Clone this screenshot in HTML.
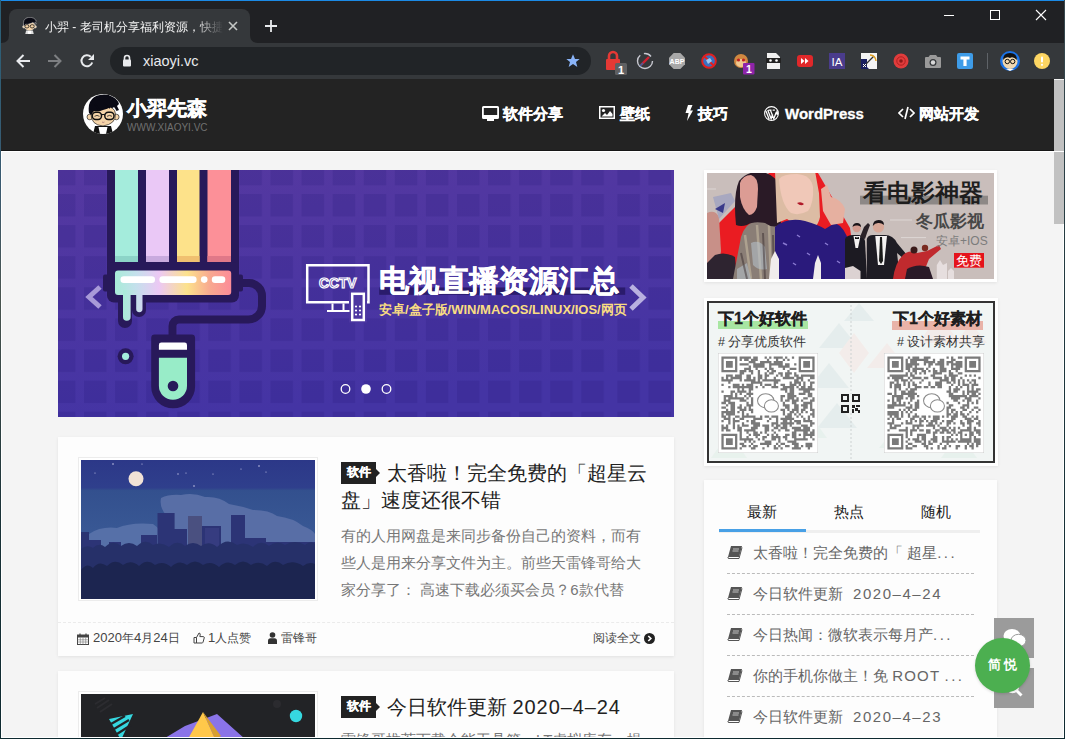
<!DOCTYPE html>
<html><head><meta charset="utf-8">
<style>
*{margin:0;padding:0;box-sizing:border-box}
html,body{width:1065px;height:739px;overflow:hidden;background:#202124;font-family:"Liberation Sans",sans-serif}
.a{position:absolute}
svg{display:block}
.card{background:#fdfdfd;box-shadow:0 1px 3px rgba(0,0,0,.08)}
.tag{width:35px;height:21.5px;background:#222;color:#fff;font-size:12px;font-weight:bold;-webkit-text-stroke:.3px #fff;line-height:21.5px;text-align:center}
.tag:after{content:"";position:absolute;left:35px;top:6.5px;border-left:4px solid #222;border-top:4px solid transparent;border-bottom:4px solid transparent}
.ttl{color:#222;font-size:20px;line-height:27px}
.exc{color:#777;font-size:15px;line-height:27px}
.qrt{top:309px;color:#1e1e1e;font-size:16px;font-weight:bold;-webkit-text-stroke:.3px #1e1e1e;line-height:20px;white-space:nowrap}
.qrs{top:334px;color:#333;font-size:12.5px;line-height:16px;white-space:nowrap}
.tab{top:502px;color:#222;font-size:15px;line-height:20px;white-space:nowrap}
.li{left:753px;color:#666;font-size:15px;line-height:26px;white-space:nowrap}
.ls{letter-spacing:1.55px}
.dl{left:727px;width:247px;height:0;border-top:1px dashed #bbb}
.meta{top:630px;color:#444;font-size:12px;line-height:16px;white-space:nowrap}
.meta b{font-weight:normal;font-size:13px}
.nav{top:104px;color:#fff;font-size:15px;font-weight:bold;-webkit-text-stroke:.3px #fff;line-height:20px;white-space:nowrap}
</style></head>
<body>
<!-- window borders -->
<div class="a" style="left:0;top:0;width:1065px;height:1px;background:#1b8ae6;z-index:50"></div>
<div class="a" style="left:0;top:0;width:1px;height:739px;background:linear-gradient(#2a6078,#3a5a70 25%,#4a5550 40%,#1a3238 70%,#0e2a30);z-index:50"></div>
<div class="a" style="left:1064px;top:0;width:1px;height:739px;background:linear-gradient(#3a4a50,#20383e 40%,#0e2a30);z-index:50"></div>
<div class="a" style="left:0;top:738px;width:1065px;height:1px;background:#0e2a30;z-index:50"></div>
<div class="a" style="left:1px;top:151px;width:1063px;height:1px;background:#fff;z-index:49"></div>
<div class="a" style="left:1px;top:151px;width:1px;height:587px;background:#fff;z-index:49"></div>
<div class="a" style="left:1px;top:737px;width:1063px;height:1px;background:#fff;z-index:49"></div>
<div class="a" style="left:1063px;top:224px;width:1px;height:514px;background:#fff;z-index:49"></div>
<div class="a" style="left:1px;top:150px;width:1053px;height:1px;background:#161616;z-index:49"></div>

<!-- tab strip -->
<div class="a" style="left:0;top:1px;width:1065px;height:42px;background:#202124"></div>
<div class="a" style="left:9px;top:9px;width:241px;height:34px;background:#35383b;border-radius:8px 8px 0 0"></div>
<div id="tabtitle" class="a" style="left:45px;top:18px;width:178px;height:18px;overflow:hidden;color:#f4f4f4;font-size:12px;line-height:18px;white-space:nowrap;-webkit-mask-image:linear-gradient(90deg,#000 150px,transparent 178px)">小羿 - 老司机分享福利资源，快捷</div>
<!-- tab close -->
<svg class="a" style="left:228px;top:21px" width="10" height="10"><path d="M1 1L9 9M9 1L1 9" stroke="#c4c7c5" stroke-width="1.6"/></svg>
<!-- new tab plus -->
<svg class="a" style="left:265px;top:20px" width="12" height="12"><path d="M6 0V12M0 6H12" stroke="#e8eaed" stroke-width="1.8"/></svg>
<!-- window controls -->
<div class="a" style="left:944px;top:15px;width:10px;height:1px;background:#fff"></div>
<div class="a" style="left:990px;top:10px;width:10px;height:10px;border:1px solid #fff"></div>
<svg class="a" style="left:1035px;top:9px" width="12" height="12"><path d="M1 1L11 11M11 1L1 11" stroke="#fff" stroke-width="1.1"/></svg>

<!-- toolbar -->
<div class="a" style="left:1px;top:43px;width:1063px;height:36px;background:#35383b"></div>
<!-- tab flares -->
<svg class="a" style="left:1px;top:35px" width="8" height="8"><path d="M0 8H8V0Q8 8 0 8Z" fill="#35383b"/></svg>
<svg class="a" style="left:250px;top:35px" width="8" height="8"><path d="M0 0V8H8Q0 8 0 0Z" fill="#35383b"/></svg>
<!-- favicon -->
<svg class="a" style="left:21px;top:17px" width="17" height="17" viewBox="0 0 40 40">
<path d="M12 32L10 40H30L28 32Z" fill="#ddd"/><path d="M15.5 33L17 40H23L24.5 33Z" fill="#fff"/>
<circle cx="6.8" cy="23" r="3" fill="#f5d4a8" stroke="#ddd" stroke-width="1.2"/><circle cx="33.3" cy="23" r="3" fill="#f5d4a8" stroke="#ddd" stroke-width="1.2"/>
<path d="M8 20Q8 12 20 12Q32 12 32.5 20Q33 30 20 32Q8 31 8 20Z" fill="#f5d4a8" stroke="#ddd" stroke-width="1"/>
<path d="M6 19Q5 12 7 8Q10 2 17 1Q24 -0.5 30 3Q35 6 36 10L34 12L36 16L33.5 17Q32 14 31 13Q29 15 27 13Q25 15 20 16Q16 18 11 17Q9 19 8.5 21Z" fill="#0a0a14" stroke="#ccc" stroke-width="1.2"/>
<rect x="9.3" y="18.2" width="9.2" height="7.3" rx="3.4" fill="none" stroke="#111" stroke-width="1.8"/><rect x="21.8" y="18.2" width="9.2" height="7.3" rx="3.4" fill="none" stroke="#111" stroke-width="1.8"/>
</svg>
<!-- nav buttons -->
<svg class="a" style="left:15px;top:53px" width="16" height="16" viewBox="0 0 16 16"><path d="M15 8H2.5M8.5 2L2.5 8L8.5 14" fill="none" stroke="#e8eaed" stroke-width="2"/></svg>
<svg class="a" style="left:47px;top:53px" width="16" height="16" viewBox="0 0 16 16"><path d="M1 8H13.5M7.5 2L13.5 8L7.5 14" fill="none" stroke="#7d7f82" stroke-width="2"/></svg>
<svg class="a" style="left:79px;top:53px" width="16" height="16" viewBox="0 0 16 16"><path d="M13.2 9.5A5.5 5.5 0 1 1 11.8 3.8" fill="none" stroke="#e8eaed" stroke-width="2"/><path d="M15 1V7H9Z" fill="#e8eaed"/></svg>
<!-- omnibox -->
<div class="a" style="left:110px;top:47px;width:481px;height:28px;background:#212427;border-radius:14px"></div>
<svg class="a" style="left:122px;top:54px" width="10" height="13" viewBox="0 0 10 13"><path d="M2.5 6V4A2.5 2.5 0 0 1 7.5 4V6" fill="none" stroke="#e8eaed" stroke-width="1.6"/><rect x="1" y="5.5" width="8" height="7" rx="1" fill="#e8eaed"/></svg>
<div class="a" style="left:143px;top:51px;color:#e8eaed;font-size:14.5px;line-height:20px">xiaoyi.vc</div>
<svg class="a" style="left:565px;top:53px" width="16" height="16" viewBox="0 0 24 24"><path d="M12 2L15 9H22L16.5 13.5L18.5 21L12 16.5L5.5 21L7.5 13.5L2 9H9Z" fill="#8ab4f8"/></svg>
<!-- extensions -->
<svg class="a" style="left:600px;top:50px" width="30" height="26" viewBox="0 0 30 26">
<path d="M9 9V6A4 4 0 0 1 17 6V9" fill="none" stroke="#e53935" stroke-width="2.6"/><rect x="6" y="9" width="14" height="11" rx="1" fill="#e53935"/>
<rect x="15" y="13" width="12" height="12" rx="1.5" fill="#5f6062"/><text x="21" y="23.5" fill="#fff" font-size="11" font-weight="bold" text-anchor="middle" font-family="Liberation Sans">1</text></svg>
<svg class="a" style="left:636px;top:52px" width="18" height="18" viewBox="0 0 18 18"><circle cx="9" cy="9" r="7.5" fill="none" stroke="#c8c8d0" stroke-width="1.4" stroke-dasharray="30 4 8 5"/><path d="M5 13L13 5" stroke="#d02030" stroke-width="2.4"/><path d="M4 14L7 11" stroke="#4060a0" stroke-width="1.6"/></svg>
<svg class="a" style="left:669px;top:53px" width="16" height="16" viewBox="0 0 16 16"><path d="M4.7 0H11.3L16 4.7V11.3L11.3 16H4.7L0 11.3V4.7Z" fill="#a8a8a8"/><text x="8" y="11" fill="#fff" font-size="7" font-weight="bold" text-anchor="middle" font-family="Liberation Sans">ABP</text></svg>
<svg class="a" style="left:701px;top:53px" width="16" height="16" viewBox="0 0 16 16"><circle cx="8" cy="8" r="6.8" fill="#3a70c0" stroke="#e02020" stroke-width="2"/><path d="M3.5 3.5L12.5 12.5" stroke="#e02020" stroke-width="2"/><path d="M5 7L9 5L11 8L7 11Z" fill="#9ec8f0"/></svg>
<svg class="a" style="left:732px;top:52px" width="24" height="24" viewBox="0 0 24 24"><circle cx="9" cy="9" r="7" fill="#d08840"/><ellipse cx="9" cy="11" rx="5" ry="4" fill="#f0c890"/><circle cx="6.5" cy="8" r="1.6" fill="#c02020"/><circle cx="11.5" cy="8" r="1.6" fill="#c02020"/><rect x="11" y="11" width="11.5" height="11.5" rx="1" fill="#8e24aa"/><text x="16.8" y="21" fill="#fff" font-size="10.5" font-weight="bold" text-anchor="middle" font-family="Liberation Sans">1</text></svg>
<svg class="a" style="left:766px;top:53px" width="15" height="16" viewBox="0 0 15 16"><path d="M1 0H10L14 4V16H1Z" fill="#f0f0f0"/><rect x="0" y="5" width="15" height="5" fill="#222"/><circle cx="4.5" cy="7.5" r="1.3" fill="#fff"/><circle cx="10.5" cy="7.5" r="1.3" fill="#fff"/></svg>
<svg class="a" style="left:797px;top:54px" width="16" height="14" viewBox="0 0 16 14"><rect x="0" y="1" width="16" height="12" rx="3" fill="#e0282a"/><path d="M4 4L7.5 7L4 10ZM8 4L11.5 7L8 10Z" fill="#fff"/></svg>
<svg class="a" style="left:829px;top:53px" width="16" height="16" viewBox="0 0 16 16"><rect width="16" height="16" fill="#4a3c8c"/><text x="8" y="13" fill="#fff" font-size="11.5" text-anchor="middle" font-family="Liberation Sans">IA</text></svg>
<svg class="a" style="left:861px;top:53px" width="16" height="16" viewBox="0 0 16 16"><rect width="16" height="16" fill="#f4f4f4"/><path d="M0 8L8 16H0Z" fill="#1a2060"/><path d="M0 6H6V16H0Z" fill="#1a2060"/><path d="M2 14L13 3" stroke="#333" stroke-width="1.2"/><path d="M9 2A6 6 0 0 1 15 8" fill="none" stroke="#e0a020" stroke-width="1.5"/><path d="M2 11L5 14M5 11L2 14" stroke="#fff" stroke-width="1"/></svg>
<svg class="a" style="left:893px;top:53px" width="16" height="16" viewBox="0 0 16 16"><circle cx="8" cy="8" r="7.5" fill="#e03c3c"/><circle cx="8" cy="8" r="4.2" fill="none" stroke="#b02020" stroke-width="1"/><circle cx="8" cy="8" r="1.8" fill="#901818"/></svg>
<svg class="a" style="left:925px;top:54px" width="16" height="14" viewBox="0 0 16 14"><path d="M5 1H11L12.5 3H15A1 1 0 0 1 16 4V13A1 1 0 0 1 15 14H1A1 1 0 0 1 0 13V4A1 1 0 0 1 1 3H3.5Z" fill="#9a9a9a"/><circle cx="8" cy="8.5" r="3.5" fill="#35383b"/><circle cx="8" cy="8.5" r="2.2" fill="#d8d8d8"/></svg>
<svg class="a" style="left:957px;top:53px" width="16" height="16" viewBox="0 0 16 16"><rect width="16" height="16" rx="2" fill="#3e9ce8"/><path d="M3.5 3.5H12.5V6.5H9.6V13H6.4V6.5H3.5Z" fill="#fff"/></svg>
<div class="a" style="left:987px;top:53px;width:1px;height:16px;background:#5f6368"></div>
<svg class="a" style="left:1000px;top:51px" width="20" height="20" viewBox="0 0 20 20"><circle cx="10" cy="10" r="10" fill="#1a73e8"/><circle cx="10" cy="10.5" r="7.5" fill="#f0d8b0"/><path d="M3 9Q3 2 10 2Q17 2 17 9Q13 5 10 7Q6 5 3 9Z" fill="#111"/><circle cx="7.3" cy="10.5" r="2.2" fill="none" stroke="#111" stroke-width="1"/><circle cx="12.7" cy="10.5" r="2.2" fill="none" stroke="#111" stroke-width="1"/><path d="M6 18L10 20L14 18Z" fill="#fff"/></svg>
<svg class="a" style="left:1034px;top:53px" width="16" height="16" viewBox="0 0 16 16"><circle cx="8" cy="8" r="8" fill="#fdd663"/><rect x="7" y="3.5" width="2" height="6" rx="1" fill="#fff"/><circle cx="8" cy="11.8" r="1.1" fill="#fff"/></svg>

<!-- page -->
<div class="a" style="left:1px;top:79px;width:1053px;height:659px;background:#f4f4f4"></div>
<!-- site header -->
<div class="a" style="left:1px;top:79px;width:1053px;height:71px;background:#232323"></div>
<svg class="a" style="left:82.7px;top:94.2px" width="40" height="40" viewBox="0 0 40 40">
<defs><clipPath id="avc"><circle cx="20" cy="20" r="20"/></clipPath></defs>
<circle cx="20" cy="20" r="20" fill="#fff"/>
<g clip-path="url(#avc)">
<path d="M12 32L10 40H30L28 32Z" fill="#111"/><path d="M15.5 33L17 40H23L24.5 33Z" fill="#fff"/>
<circle cx="6.8" cy="23" r="2.8" fill="#f5d4a8" stroke="#222" stroke-width=".7"/><circle cx="33.3" cy="23" r="2.8" fill="#f5d4a8" stroke="#222" stroke-width=".7"/>
<path d="M8 20Q8 12 20 12Q32 12 32.5 20Q33 30 20 32Q8 31 8 20Z" fill="#f5d4a8" stroke="#222" stroke-width=".7"/>
<path d="M6 19Q5 12 7 8Q10 2 17 1Q24 -0.5 30 3Q35 6 36 10L34 12L36 16L33.5 17Q32 14 31 13Q29 15 27 13Q25 15 20 16Q16 18 11 17Q9 19 8.5 21Z" fill="#0a0a14"/>
<path d="M21 9Q25 13 27 14M12 10L16 16" stroke="#0a0a14" stroke-width="1.5"/>
<rect x="9.3" y="18.2" width="9.2" height="7.3" rx="3.4" fill="none" stroke="#111" stroke-width="1.5"/><rect x="21.8" y="18.2" width="9.2" height="7.3" rx="3.4" fill="none" stroke="#111" stroke-width="1.5"/><path d="M18.5 20.5H21.8" stroke="#111" stroke-width="1.2"/>
<path d="M11.5 22.3Q14 20.5 16.5 22.3M24 22.3Q26.5 20.5 29 22.3" fill="none" stroke="#222" stroke-width=".8"/>
<path d="M19 28Q20 29 21.5 28" fill="none" stroke="#a77" stroke-width=".8"/>
</g></svg>
<div class="a" style="left:127px;top:96px;color:#fff;font-size:20px;font-weight:bold;-webkit-text-stroke:.5px #fff;line-height:24px;white-space:nowrap">小羿先森</div>
<div class="a" style="left:127px;top:122px;color:#707070;font-size:10px;line-height:12px;white-space:nowrap">WWW.XIAOYI.VC</div>
<!-- nav -->
<svg class="a" style="left:482px;top:105.5px" width="17" height="15" viewBox="0 0 17 15"><path d="M0 1.5A1.5 1.5 0 0 1 1.5 0H15.5A1.5 1.5 0 0 1 17 1.5V11.5A1.5 1.5 0 0 1 15.5 13H1.5A1.5 1.5 0 0 1 0 11.5Z M1.8 2V9H15.2V2Z" fill="#fff" fill-rule="evenodd"/><rect x="5" y="13" width="7" height="2" fill="#fff"/></svg>
<div class="a nav" style="left:503px">软件分享</div>
<svg class="a" style="left:599px;top:106px" width="16" height="13" viewBox="0 0 16 13"><path d="M0 0H16V13H0Z M1.5 1.5V11.5H14.5V1.5Z" fill="#fff" fill-rule="evenodd"/><circle cx="4.5" cy="4.5" r="1.6" fill="#fff"/><path d="M2.5 10.5L6 7L8 9L11 5L13.5 8V10.5Z" fill="#fff"/></svg>
<div class="a nav" style="left:620px">壁纸</div>
<svg class="a" style="left:685px;top:105px" width="8" height="16" viewBox="0 0 8 16"><path d="M3 0H7.5L5.2 5.5H8L2 16L3.6 8H0.5Z" fill="#fff"/></svg>
<div class="a nav" style="left:698px">技巧</div>
<svg class="a" style="left:764px;top:105.5px" width="15" height="15" viewBox="0 0 20 20"><circle cx="10" cy="10" r="9.2" fill="none" stroke="#fff" stroke-width="1.4"/><path d="M2.5 6.5L7 18M6 5.5H10M5 5.5L9.5 17L11.5 11M8.5 5.5L13 17L16.5 8M11.5 5.5H14.5M17 6Q18.5 9 17.5 12" fill="none" stroke="#fff" stroke-width="1.8"/></svg>
<div class="a nav" style="left:785px">WordPress</div>
<svg class="a" style="left:898px;top:106px" width="17" height="14" viewBox="0 0 17 14"><path d="M5 3L1 7L5 11M12 3L16 7L12 11M10 1L7 13" fill="none" stroke="#fff" stroke-width="1.7"/></svg>
<div class="a nav" style="left:919px">网站开发</div>
<!-- slider -->
<svg class="a" style="left:58px;top:170px" width="616" height="247" viewBox="0 0 616 247">
<defs>
<linearGradient id="sbg" x1="0" y1="0" x2="0.25" y2="1"><stop offset="0" stop-color="#5538a0"/><stop offset="1" stop-color="#4434a4"/></linearGradient>
<pattern id="sq" patternUnits="userSpaceOnUse" x="-5.08" y="-7.1" width="31.08" height="31.1"><rect x="0" y="0" width="22.6" height="22.5" fill="#1e1470" fill-opacity="0.17"/></pattern><pattern id="sq2" patternUnits="userSpaceOnUse" x="-0.08" y="-7.1" width="31.08" height="31.1"><rect x="0" y="0" width="22.6" height="22.5" fill="#1e1470" fill-opacity="0.17"/></pattern>
<linearGradient id="rg" x1="0" y1="0" x2="1" y2="0"><stop offset="0" stop-color="#a8ecd8"/><stop offset="0.18" stop-color="#c4e0ec"/><stop offset="0.38" stop-color="#ecc8f4"/><stop offset="0.62" stop-color="#fce28c"/><stop offset="0.82" stop-color="#f8a890"/><stop offset="1" stop-color="#fc8c98"/></linearGradient>
<linearGradient id="dg" x1="0" y1="0" x2="1" y2="0"><stop offset="0" stop-color="#a8ecd8"/><stop offset="1" stop-color="#d0d8f0"/></linearGradient>
</defs>
<rect width="616" height="247" fill="url(#sbg)"/>
<rect width="553" height="247" fill="url(#sq)"/><rect x="553" width="63" height="247" fill="url(#sq2)"/>
<g transform="translate(-58,-170)">
<!-- stripes frame -->
<rect x="107" y="160" width="132" height="110" fill="#28195a"/>
<rect x="115" y="160" width="23" height="102" fill="#a4ecdc"/><rect x="115" y="256" width="23" height="6" fill="#8cd4c8"/>
<rect x="146" y="160" width="23" height="102" fill="#eac8f6"/><rect x="146" y="256" width="23" height="6" fill="#c8aade"/>
<rect x="177" y="160" width="22.5" height="102" fill="#fde28a"/><rect x="177" y="256" width="22.5" height="6" fill="#f0c070"/>
<rect x="207.5" y="160" width="23.5" height="102" fill="#fc9098"/><rect x="207.5" y="256" width="23.5" height="6" fill="#e07888"/>
<!-- roller -->
<rect x="103" y="274.5" width="6" height="17" rx="2" fill="#28195a"/><rect x="237" y="274.5" width="6" height="17" rx="2" fill="#28195a"/>
<rect x="107" y="262" width="132" height="40.5" rx="7" fill="#28195a"/>
<path d="M118 298V321A7 7 0 0 0 132 321V310A7 7 0 0 0 146 310V298Z" fill="#28195a"/>
<rect x="115" y="270.4" width="116.2" height="24.6" rx="3" fill="url(#rg)"/>
<path d="M123 290V317A3.8 3.8 0 0 0 130.6 317V295H136.2V309A3.15 3.15 0 0 0 142.5 309V290Z" fill="url(#dg)"/>
<rect x="120.5" y="276.3" width="34.5" height="6.7" rx="3.3" fill="#fff"/><rect x="159.4" y="276.3" width="37.2" height="6.7" rx="3.3" fill="#fff"/><circle cx="204.2" cy="279.6" r="3.3" fill="#fff"/><rect x="211.8" y="276.3" width="13.5" height="6.7" rx="3.3" fill="#fff"/>
<!-- wire -->
<path d="M240 283H249A13 13 0 0 1 262 296V306A13.5 13.5 0 0 1 248.5 319.5H179A6.5 6.5 0 0 0 172.5 326V340" fill="none" stroke="#28195a" stroke-width="8"/>
<!-- handle -->
<path d="M151.2 338A3.5 3.5 0 0 1 154.7 334.6H191.6A3.5 3.5 0 0 1 195.1 338V386.4A21.95 21.95 0 0 1 151.2 386.4Z" fill="#28195a"/>
<path d="M158.9 345A2.4 2.4 0 0 1 161.3 342.6H184.6A2.4 2.4 0 0 1 187 345V349.8H158.9Z" fill="#fff"/>
<path d="M158.9 357.8H187V385.7A14.05 14.05 0 0 1 158.9 385.7Z" fill="#98ecc8"/>
<circle cx="173" cy="386" r="5.3" fill="#28195a"/>
<circle cx="125.6" cy="356.3" r="8" fill="#28195a"/><circle cx="125.6" cy="356.3" r="3.6" fill="#a4ecdc"/>
<!-- arrows -->
<path d="M100 287L89 297L100 307" fill="none" stroke="#a89ad8" stroke-width="5" stroke-linejoin="miter"/>
<path d="M631 286L643 297.5L631 309" fill="none" stroke="#b8b0e0" stroke-width="5"/>
<!-- tv -->
<path d="M307.2 265.2H368.5V302.3H307.2Z" fill="none" stroke="#fff" stroke-width="2.5"/>
<rect x="349" y="290.5" width="18" height="32" fill="#4d37a1"/>
<rect x="352.2" y="293.8" width="11.6" height="26.2" fill="none" stroke="#fff" stroke-width="2.5"/>
<circle cx="356" cy="306.5" r="1.1" fill="#fff"/><circle cx="360" cy="306.5" r="1.1" fill="#fff"/><circle cx="356" cy="310.5" r="1.1" fill="#fff"/><circle cx="360" cy="310.5" r="1.1" fill="#fff"/><circle cx="356" cy="314.5" r="1.1" fill="#fff"/><circle cx="360" cy="314.5" r="1.1" fill="#fff"/>
<path d="M332.5 303.5V310M343.5 303.5V310M327 311H349.5" fill="none" stroke="#fff" stroke-width="2"/>
<text x="319" y="288" font-family="Liberation Sans" font-weight="bold" font-size="14.5" fill="none" stroke="#fff" stroke-width="1.2" textLength="37.5" lengthAdjust="spacingAndGlyphs">CCTV</text>
<!-- title band -->
<rect x="379.2" y="287.5" width="246" height="7.3" fill="#2a1b6c"/>
<!-- dots -->
<circle cx="345.5" cy="389" r="4.3" fill="none" stroke="#fff" stroke-width="1.3"/>
<circle cx="366" cy="389" r="4.8" fill="#fff"/>
<circle cx="386.5" cy="389" r="4.3" fill="none" stroke="#fff" stroke-width="1.3"/>
</g>
</svg>
<div class="a" style="left:379px;top:264px;color:#fff;font-size:29.5px;font-weight:bold;-webkit-text-stroke:.6px #fff;line-height:34px;white-space:nowrap">电视直播资源汇总</div>
<div class="a" style="left:379px;top:302px;color:#f9dd82;font-size:13px;font-weight:bold;line-height:16px;white-space:nowrap">安卓/盒子版/WIN/MACOS/LINUX/IOS/网页</div>
<!-- post card 1 -->
<div class="a card" style="left:58px;top:437px;width:616px;height:219px"></div>
<div class="a" style="left:78px;top:457px;width:240px;height:144px;border:1px solid #ececec;background:#fff"></div>
<svg class="a" style="left:81px;top:460px" width="234" height="139" viewBox="0 0 234 139">
<defs><linearGradient id="sky" x1="0" y1="0" x2="0" y2="1"><stop offset="0" stop-color="#2c3888"/><stop offset="0.2" stop-color="#2f3f8c"/><stop offset="0.22" stop-color="#33508e"/><stop offset="0.6" stop-color="#3a5a96"/></linearGradient></defs>
<rect width="234" height="139" fill="url(#sky)"/>
<g fill="#c8c8e8"><circle cx="32" cy="4" r=".8"/><circle cx="14" cy="13" r=".6"/><circle cx="97" cy="14" r=".7"/><circle cx="105" cy="13" r=".6"/><circle cx="113" cy="26" r=".8"/><circle cx="178" cy="6" r=".8"/><circle cx="185" cy="12" r=".6"/><circle cx="160" cy="9" r=".6"/><circle cx="61" cy="4" r=".6"/><circle cx="132" cy="14" r=".6"/></g>
<circle cx="55" cy="18.7" r="7.5" fill="#f2e2d6"/>
<path d="M80 38Q88 34 100 35Q112 32 124 37Q138 36 148 44Q160 46 172 50Q188 50 196 56Q212 58 222 66Q232 70 234 74V88H60Q70 80 84 72Q76 62 86 56Q78 48 80 38Z" fill="#586ea6"/>
<path d="M8 74Q20 66 36 68Q50 62 72 64Q82 70 80 80Q76 86 60 88H10Q2 82 8 74Z" fill="#5670a8"/>
<path d="M0 72H8V96H0Z" fill="#2a3472"/>
<path d="M2 80H20V100H2Z M28 82H40V100H28Z M60 75H76V100H60Z M76.5 53H93.6V100H76.5Z M93 69H106V100H93Z M107 56H121V100H107Z M121 66H140V100H121Z M150 55H164V100H150Z M164 78H185V100H164Z M185 82H234V100H185Z" fill="#2c3476"/>
<path d="M107 56H121V95H107Z" fill="#4a5080"/>
<path d="M124 68H138V100H124Z" fill="#363c80"/>
<path d="M0 89Q6 84 12 88Q18 82 24 87Q32 79 40 86Q48 80 56 86Q64 78 72 85Q80 81 88 87Q96 79 104 86Q112 80 120 86Q128 80 136 87Q146 77 156 85Q164 81 172 87Q180 79 188 86Q196 80 204 85Q214 79 224 85Q230 80 234 84V139H0Z" fill="#263069"/>
<path d="M0 110Q6 102 12 108Q18 100 26 106Q34 98 42 105Q50 99 58 106Q66 98 74 105Q82 100 90 107Q98 99 106 105Q114 98 122 105Q130 100 138 107Q146 99 154 105Q162 98 170 105Q178 100 186 106Q194 98 202 105Q212 99 222 106Q228 101 234 104V139H0Z" fill="#1c2550"/>
</svg>
<div class="a tag" style="left:341px;top:462px">软件</div>
<div class="a ttl" style="left:341px;top:460px;width:330px;white-space:nowrap"><span style="display:inline-block;width:46px"></span>太香啦！完全免费的「超星云<br>盘」速度还很不错</div>
<div class="a exc" style="left:341px;top:522px;width:330px;white-space:nowrap">有的人用网盘是来同步备份自己的资料，而有<br>些人是用来分享文件为主。前些天雷锋哥给大<br>家分享了：&nbsp;高速下载必须买会员？6款代替</div>
<div class="a" style="left:58px;top:622px;width:616px;height:0;border-top:1px dashed #ebebeb"></div>
<svg class="a" style="left:77px;top:633px" width="12" height="12" viewBox="0 0 12 12"><rect x=".5" y="2" width="11" height="9.5" fill="none" stroke="#444" stroke-width="1"/><rect x=".5" y="2" width="11" height="2.5" fill="#444"/><path d="M3 0.5V3M9 0.5V3" stroke="#444" stroke-width="1.2"/><path d="M0.5 6.8H11.5M0.5 9H11.5M3.3 4.5V11.5M6 4.5V11.5M8.7 4.5V11.5" stroke="#777" stroke-width=".6"/></svg>
<div class="a meta" style="left:93px"><b>2020</b>年<b>4</b>月<b>24</b>日</div>
<svg class="a" style="left:193px;top:632px" width="12" height="12" viewBox="0 0 12 12"><path d="M1 5.5H3.5V11H1Z M3.5 5.5L6 1Q7.5 1 7.2 3L6.8 4.6H10.5Q11.5 4.8 11.2 6L10 10.3Q9.7 11 9 11H3.5" fill="none" stroke="#444" stroke-width="1"/></svg>
<div class="a meta" style="left:208px"><b>1</b>人点赞</div>
<svg class="a" style="left:268px;top:632px" width="9" height="12" viewBox="0 0 9 12"><circle cx="4.5" cy="3" r="2.8" fill="#333"/><path d="M0 12V9Q0 6.2 2.5 6.2H6.5Q9 6.2 9 9V12Z" fill="#333"/></svg>
<div class="a meta" style="left:281px">雷锋哥</div>
<div class="a meta" style="left:593px">阅读全文</div>
<svg class="a" style="left:644px;top:633px" width="11" height="11" viewBox="0 0 11 11"><circle cx="5.5" cy="5.5" r="5.5" fill="#222"/><path d="M4.3 3L6.8 5.5L4.3 8" fill="none" stroke="#fff" stroke-width="1.7"/></svg>

<!-- post card 2 -->
<div class="a card" style="left:58px;top:671px;width:616px;height:120px"></div>
<div class="a" style="left:78px;top:691px;width:240px;height:144px;border:1px solid #ececec;background:#fff"></div>
<svg class="a" style="left:81px;top:694px" width="234" height="60" viewBox="0 0 234 60">
<rect width="234" height="60" fill="#222326"/>
<circle cx="196" cy="10" r="4" fill="#2b2b2f"/>
<circle cx="215" cy="22" r="6.2" fill="#36d8e0"/>
<path d="M28 25L52 20L40 46Z" fill="#36d8e0"/>
<path d="M30 30L44 22M33 35L48 26M36 40L50 31" stroke="#222326" stroke-width="2.2"/>
<path d="M14 10L24 4M16 14L28 6M19 18L31 10" stroke="#2c2c30" stroke-width="2"/>
<path d="M74 50L104 32L136 20L164 45H74Z" fill="#8a74e8"/>
<path d="M107 45L122 18L134 45Z" fill="#ffc84a"/><path d="M122 18L134 45L140 42Z" fill="#d8a030"/>
</svg>
<div class="a tag" style="left:341px;top:696px">软件</div>
<div class="a ttl" style="left:341px;top:694px;width:320px;white-space:nowrap"><span style="display:inline-block;width:46px"></span>今日软件更新 <span style="letter-spacing:.9px">2020–4–24</span></div>
<div class="a exc" style="left:341px;top:726px;width:303px;white-space:nowrap">雷锋哥推荐下载今能工具箱，LT虚拟库存，提</div>
<!-- sidebar ad 1 -->
<div class="a card" style="left:704px;top:170px;width:293px;height:112px;background:#fff"></div>
<svg class="a" style="left:707px;top:173px" width="287" height="106" viewBox="0 0 287 106">
<defs><clipPath id="adc"><rect width="287" height="106"/></clipPath></defs>
<g clip-path="url(#adc)">
<rect width="287" height="106" fill="#c9bebb"/>
<path d="M0 62L62 0H111L143 55L150 106H0Z" fill="#ea1c22"/>
<path d="M0 40Q8 36 12 44L14 78L12 92H0Z" fill="#c89088"/>
<path d="M6 24L24 20L28 28L12 46Z" fill="#a8a8c0"/><path d="M8 36L18 30L16 40Z" fill="#3a3a8a"/>
<path d="M0 90L8 82Q18 78 28 84L30 106H0Z" fill="#2e2430"/>
<path d="M26 106L34 64Q38 50 52 46Q70 46 76 56L78 106Z" fill="#8a7e76"/>
<path d="M38 62L44 106M50 52L54 106M62 52L64 106M70 58L72 100" stroke="#d0c4a8" stroke-width="2.5" opacity=".5"/>
<path d="M44 70Q52 66 58 74L60 96Q52 98 46 92Z M30 96L40 90L44 106H30Z" fill="#b8c4d0" opacity=".55"/>
<path d="M34 80L40 106M56 60L58 106M66 62L67 106" stroke="#3a2e30" stroke-width="2" opacity=".5"/>
<path d="M29 52Q26 22 32 8Q40 -2 54 -1Q70 1 73 16L74 52Q66 56 58 50Q46 48 40 52Q34 54 29 52Z" fill="#2a1a26"/>
<path d="M33 10Q36 2 44 2Q51 4 51 16L50 34Q47 42 42 42Q35 36 33 24Z" fill="#dc9c94"/>
<path d="M68 -2H108L112 20L113 44Q110 58 98 58Q86 50 80 46L70 50Z" fill="#dcbca4"/>
<path d="M72 6Q76 1 90 1Q104 2 106 14Q107 30 101 38Q92 43 84 40Q74 32 72 6Z" fill="#f0c8b8"/>
<path d="M90 30Q94 28 97 31Q94 34 90 30Z" fill="#b01828"/>
<path d="M68 54Q80 44 98 48Q112 52 118 56L128 50Q138 54 142 70L144 106H68Z" fill="#2a1a7c"/>
<path d="M76 70L80 72M90 62L93 64M100 80L103 82M118 70L121 72M130 88L133 90M110 95L113 97M86 90L89 92" stroke="#8878d0" stroke-width="1.5"/>
<path d="M114 16L120 12L124 24Q134 26 138 36L136 50L124 52L116 38Z" fill="#e6b0a0"/>
<path d="M64 86L68 78L72 86V106H62Z M108 90L111 82L114 90V106H106Z" fill="#f0ecec"/>
<path d="M138 66Q140 62 146 62H152Q157 63 158 68L160 106H138Z" fill="#1c1a22"/>
<path d="M146.5 63H153.5L151 75H148.5Z" fill="#f2f0f0"/><path d="M148 64L151 64.5L148 66ZM152 64L149 64.5L152 66Z" fill="#111"/>
<path d="M153 64L157 54L161 50L163 52L160 60L158 66Z" fill="#2a2228"/>
<circle cx="149.7" cy="55" r="4.2" fill="#d49c90"/><path d="M145.5 54Q146 50 150 50Q154 50 154 54Q152 52 150 52.5Q147 52 145.5 54Z" fill="#1a1418"/>
<path d="M159.8 66Q161 62 166 62H178Q186 62 190 70L200 82L197 86L190 80L193 106H159.8Z" fill="#1e1c24"/>
<path d="M168.3 63H180L177 92H171Z" fill="#f4f2f2"/><path d="M173 64H175L176 88L174 91L172 88Z" fill="#1a1a1a"/>
<circle cx="171.5" cy="54" r="5.6" fill="#d8a898"/><path d="M165.8 53Q166 47 171.5 47Q177 47 177 52Q174 49.5 171 50Q168 50 165.8 53Z" fill="#1a1418"/>
<path d="M186 106Q188 90 196 82Q202 76 210 80L220 78L232 72L234 76L222 86L214 106Z" fill="#c02a2e"/>
<circle cx="207" cy="77" r="3.5" fill="#3a1a1a"/><circle cx="218" cy="75" r="3.2" fill="#7a2a20"/>
<path d="M200 96Q210 90 222 94L226 106H198Z" fill="#2a1a28"/>
<path d="M229.8 92L233 87L236 92L240 90V106H229.8Z" fill="#e6dede"/><path d="M241 98L244 95L247 98V106H241Z" fill="#e6dede"/>
<path d="M138 95L146 93L153.5 98V106H138Z" fill="#dcd2d2"/>
<rect x="153" y="22.7" width="128" height="8.8" fill="#8d8886"/>
<path d="M183 47H205M194 64.6H219M0 16H9" stroke="#e8e4e4" stroke-width=".8" opacity=".8"/>
<rect x="247" y="80" width="30" height="14.7" fill="#e5131b"/>
</g></svg>
<div class="a" style="left:863px;top:179px;color:#1e1e1e;font-size:24px;font-weight:bold;line-height:28px;white-space:nowrap">看电影神器</div>
<div class="a" style="left:916px;top:212px;color:#474747;font-size:17px;font-weight:bold;line-height:20px;white-space:nowrap">冬瓜影视</div>
<div class="a" style="left:936px;top:234px;color:#7c7c7c;font-size:12px;line-height:15px;white-space:nowrap">安卓+IOS</div>
<div class="a" style="left:954px;top:253px;width:30px;color:#fff;font-size:13px;line-height:15px;text-align:center;white-space:nowrap">免费</div>

<!-- sidebar ad 2 -->
<div class="a card" style="left:704px;top:298px;width:294px;height:168px;background:#fff"></div>
<div class="a" style="left:707px;top:301px;width:288px;height:162px;border:2px solid #333;background:#f1f5f4"></div>
<svg class="a" style="left:709px;top:303px" width="284" height="158" viewBox="0 0 284 158">
<g opacity=".55">
<path d="M130 20L150 45H110Z M120 60L140 85H100Z M128 100L148 125H108Z M150 0L165 18H135Z" fill="#dde8e8"/>
<path d="M145 30L160 50L145 70L130 50Z M262 20L278 40H246Z M230 10L250 40H210Z M178 40L198 65H158Z" fill="#f6e6e2"/>
<path d="M100 110L118 135H82Z M190 120L210 145H170Z M20 130L38 155H2Z M250 130L268 155H232Z" fill="#e0eee8"/>
</g>
<path d="M142 2V156" stroke="#cdd2d2" stroke-width="1" stroke-dasharray="2 2"/>
</svg>
<div class="a" style="left:718px;top:320.5px;width:90px;height:8.2px;background:#a8e6a2"></div>
<div class="a" style="left:892.4px;top:321.4px;width:90.8px;height:8.7px;background:#e9b3a8"></div>
<div class="a qrt" style="left:718px">下1个好软件</div>
<div class="a qrt" style="left:893px">下1个好素材</div>
<div class="a qrs" style="left:718px"># 分享优质软件</div>
<div class="a qrs" style="left:897px"># 设计素材共享</div>
<svg class="a" style="left:718px;top:353px" width="100" height="100" viewBox="-1.5 -1.5 44 44"><rect x="-1.5" y="-1.5" width="44" height="44" fill="#fff" stroke="#c8c8c8" stroke-width=".4"/><path d="M0 0h7v1h-7zM8 0h5v1h-5zM14 0h2v1h-2zM19 0h1v1h-1zM21 0h1v1h-1zM23 0h4v1h-4zM28 0h1v1h-1zM31 0h1v1h-1zM34 0h7v1h-7zM0 1h1v1h-1zM6 1h1v1h-1zM8 1h1v1h-1zM10 1h2v1h-2zM13 1h3v1h-3zM20 1h1v1h-1zM24 1h1v1h-1zM27 1h1v1h-1zM29 1h1v1h-1zM34 1h1v1h-1zM40 1h1v1h-1zM0 2h1v1h-1zM2 2h3v1h-3zM6 2h1v1h-1zM12 2h3v1h-3zM17 2h5v1h-5zM23 2h4v1h-4zM34 2h1v1h-1zM36 2h3v1h-3zM40 2h1v1h-1zM0 3h1v1h-1zM2 3h3v1h-3zM6 3h1v1h-1zM8 3h4v1h-4zM14 3h5v1h-5zM21 3h6v1h-6zM28 3h2v1h-2zM32 3h1v1h-1zM34 3h1v1h-1zM36 3h3v1h-3zM40 3h1v1h-1zM0 4h1v1h-1zM2 4h3v1h-3zM6 4h1v1h-1zM12 4h1v1h-1zM14 4h5v1h-5zM21 4h1v1h-1zM25 4h5v1h-5zM34 4h1v1h-1zM36 4h3v1h-3zM40 4h1v1h-1zM0 5h1v1h-1zM6 5h1v1h-1zM10 5h3v1h-3zM15 5h1v1h-1zM19 5h1v1h-1zM21 5h2v1h-2zM27 5h1v1h-1zM30 5h3v1h-3zM34 5h1v1h-1zM40 5h1v1h-1zM0 6h7v1h-7zM8 6h3v1h-3zM12 6h2v1h-2zM16 6h1v1h-1zM20 6h1v1h-1zM22 6h2v1h-2zM29 6h1v1h-1zM34 6h7v1h-7zM8 7h2v1h-2zM13 7h1v1h-1zM16 7h1v1h-1zM19 7h1v1h-1zM21 7h2v1h-2zM25 7h2v1h-2zM28 7h3v1h-3zM32 7h1v1h-1zM2 8h3v1h-3zM6 8h3v1h-3zM11 8h2v1h-2zM16 8h2v1h-2zM19 8h2v1h-2zM24 8h1v1h-1zM26 8h1v1h-1zM28 8h2v1h-2zM32 8h2v1h-2zM35 8h6v1h-6zM0 9h1v1h-1zM2 9h1v1h-1zM4 9h5v1h-5zM11 9h2v1h-2zM14 9h1v1h-1zM16 9h2v1h-2zM19 9h1v1h-1zM23 9h1v1h-1zM27 9h5v1h-5zM33 9h3v1h-3zM39 9h2v1h-2zM0 10h5v1h-5zM8 10h1v1h-1zM10 10h5v1h-5zM16 10h1v1h-1zM18 10h8v1h-8zM32 10h2v1h-2zM35 10h1v1h-1zM38 10h1v1h-1zM3 11h1v1h-1zM13 11h5v1h-5zM23 11h2v1h-2zM30 11h1v1h-1zM32 11h3v1h-3zM36 11h1v1h-1zM39 11h2v1h-2zM0 12h1v1h-1zM5 12h3v1h-3zM9 12h1v1h-1zM11 12h3v1h-3zM17 12h1v1h-1zM19 12h3v1h-3zM23 12h1v1h-1zM26 12h2v1h-2zM30 12h3v1h-3zM34 12h1v1h-1zM36 12h1v1h-1zM39 12h1v1h-1zM3 13h1v1h-1zM5 13h9v1h-9zM15 13h1v1h-1zM18 13h1v1h-1zM22 13h3v1h-3zM27 13h5v1h-5zM33 13h1v1h-1zM35 13h2v1h-2zM38 13h2v1h-2zM7 14h1v1h-1zM9 14h1v1h-1zM12 14h2v1h-2zM26 14h3v1h-3zM30 14h2v1h-2zM34 14h7v1h-7zM0 15h1v1h-1zM4 15h2v1h-2zM7 15h4v1h-4zM12 15h1v1h-1zM28 15h1v1h-1zM30 15h2v1h-2zM36 15h3v1h-3zM4 16h1v1h-1zM6 16h1v1h-1zM8 16h1v1h-1zM11 16h3v1h-3zM29 16h3v1h-3zM34 16h3v1h-3zM38 16h2v1h-2zM1 17h4v1h-4zM6 17h1v1h-1zM10 17h1v1h-1zM12 17h1v1h-1zM26 17h2v1h-2zM29 17h4v1h-4zM38 17h2v1h-2zM1 18h1v1h-1zM3 18h7v1h-7zM11 18h1v1h-1zM13 18h1v1h-1zM26 18h1v1h-1zM29 18h3v1h-3zM33 18h1v1h-1zM36 18h2v1h-2zM40 18h1v1h-1zM1 19h3v1h-3zM8 19h3v1h-3zM13 19h1v1h-1zM26 19h1v1h-1zM28 19h2v1h-2zM31 19h3v1h-3zM35 19h1v1h-1zM39 19h2v1h-2zM0 20h2v1h-2zM3 20h3v1h-3zM11 20h1v1h-1zM13 20h1v1h-1zM27 20h1v1h-1zM31 20h2v1h-2zM36 20h4v1h-4zM2 21h1v1h-1zM4 21h2v1h-2zM8 21h1v1h-1zM11 21h3v1h-3zM27 21h3v1h-3zM32 21h2v1h-2zM35 21h3v1h-3zM39 21h1v1h-1zM0 22h2v1h-2zM4 22h2v1h-2zM7 22h2v1h-2zM10 22h1v1h-1zM12 22h1v1h-1zM28 22h2v1h-2zM32 22h2v1h-2zM36 22h2v1h-2zM39 22h1v1h-1zM2 23h1v1h-1zM4 23h2v1h-2zM8 23h3v1h-3zM12 23h2v1h-2zM26 23h2v1h-2zM29 23h1v1h-1zM31 23h3v1h-3zM35 23h2v1h-2zM39 23h2v1h-2zM0 24h6v1h-6zM7 24h1v1h-1zM9 24h1v1h-1zM13 24h1v1h-1zM27 24h1v1h-1zM30 24h2v1h-2zM33 24h1v1h-1zM35 24h1v1h-1zM37 24h1v1h-1zM40 24h1v1h-1zM0 25h1v1h-1zM2 25h4v1h-4zM9 25h1v1h-1zM11 25h1v1h-1zM27 25h1v1h-1zM29 25h2v1h-2zM32 25h1v1h-1zM34 25h1v1h-1zM39 25h2v1h-2zM0 26h2v1h-2zM3 26h1v1h-1zM6 26h2v1h-2zM9 26h6v1h-6zM17 26h1v1h-1zM19 26h2v1h-2zM22 26h3v1h-3zM28 26h3v1h-3zM33 26h1v1h-1zM35 26h1v1h-1zM38 26h1v1h-1zM40 26h1v1h-1zM1 27h3v1h-3zM5 27h1v1h-1zM8 27h2v1h-2zM14 27h4v1h-4zM21 27h1v1h-1zM24 27h1v1h-1zM26 27h6v1h-6zM36 27h1v1h-1zM38 27h1v1h-1zM0 28h1v1h-1zM3 28h1v1h-1zM5 28h3v1h-3zM11 28h1v1h-1zM13 28h2v1h-2zM20 28h1v1h-1zM24 28h1v1h-1zM27 28h2v1h-2zM30 28h1v1h-1zM32 28h3v1h-3zM36 28h4v1h-4zM3 29h1v1h-1zM5 29h1v1h-1zM9 29h1v1h-1zM13 29h4v1h-4zM22 29h3v1h-3zM26 29h6v1h-6zM33 29h2v1h-2zM39 29h2v1h-2zM0 30h1v1h-1zM2 30h1v1h-1zM5 30h1v1h-1zM7 30h1v1h-1zM9 30h3v1h-3zM14 30h3v1h-3zM18 30h3v1h-3zM22 30h1v1h-1zM24 30h2v1h-2zM27 30h2v1h-2zM30 30h1v1h-1zM35 30h3v1h-3zM39 30h1v1h-1zM0 31h3v1h-3zM5 31h1v1h-1zM7 31h2v1h-2zM13 31h3v1h-3zM19 31h2v1h-2zM23 31h2v1h-2zM26 31h3v1h-3zM31 31h4v1h-4zM36 31h3v1h-3zM0 32h1v1h-1zM2 32h2v1h-2zM7 32h2v1h-2zM10 32h5v1h-5zM19 32h2v1h-2zM22 32h1v1h-1zM25 32h1v1h-1zM28 32h2v1h-2zM32 32h7v1h-7zM40 32h1v1h-1zM8 33h1v1h-1zM11 33h1v1h-1zM14 33h2v1h-2zM17 33h1v1h-1zM19 33h1v1h-1zM23 33h1v1h-1zM31 33h2v1h-2zM36 33h2v1h-2zM39 33h2v1h-2zM0 34h7v1h-7zM8 34h1v1h-1zM12 34h1v1h-1zM14 34h3v1h-3zM20 34h1v1h-1zM22 34h1v1h-1zM24 34h1v1h-1zM28 34h2v1h-2zM31 34h2v1h-2zM34 34h1v1h-1zM36 34h5v1h-5zM0 35h1v1h-1zM6 35h1v1h-1zM8 35h1v1h-1zM11 35h1v1h-1zM15 35h1v1h-1zM18 35h2v1h-2zM22 35h4v1h-4zM27 35h2v1h-2zM31 35h2v1h-2zM36 35h1v1h-1zM39 35h1v1h-1zM0 36h1v1h-1zM2 36h3v1h-3zM6 36h1v1h-1zM8 36h6v1h-6zM16 36h1v1h-1zM18 36h1v1h-1zM22 36h2v1h-2zM25 36h1v1h-1zM28 36h1v1h-1zM32 36h6v1h-6zM40 36h1v1h-1zM0 37h1v1h-1zM2 37h3v1h-3zM6 37h1v1h-1zM10 37h1v1h-1zM12 37h1v1h-1zM14 37h1v1h-1zM19 37h3v1h-3zM25 37h1v1h-1zM29 37h4v1h-4zM0 38h1v1h-1zM2 38h3v1h-3zM6 38h1v1h-1zM8 38h2v1h-2zM13 38h1v1h-1zM17 38h5v1h-5zM24 38h1v1h-1zM26 38h2v1h-2zM31 38h3v1h-3zM37 38h3v1h-3zM0 39h1v1h-1zM6 39h1v1h-1zM9 39h2v1h-2zM12 39h1v1h-1zM14 39h2v1h-2zM20 39h1v1h-1zM23 39h1v1h-1zM25 39h1v1h-1zM28 39h2v1h-2zM32 39h2v1h-2zM35 39h1v1h-1zM37 39h3v1h-3zM0 40h7v1h-7zM8 40h1v1h-1zM13 40h2v1h-2zM18 40h1v1h-1zM23 40h2v1h-2zM26 40h1v1h-1zM31 40h4v1h-4zM38 40h1v1h-1z" fill="#7a7a7a"/><rect x="15.5" y="15.5" width="10" height="10" fill="#fff"/><g fill="none" stroke="#8a8a8a" stroke-width=".45"><ellipse cx="19.5" cy="19.5" rx="3.6" ry="3.1"/><ellipse cx="22" cy="21.8" rx="3.1" ry="2.7" fill="#fff"/></g></svg>
<svg class="a" style="left:884px;top:353px" width="100" height="100" viewBox="-1.5 -1.5 44 44"><rect x="-1.5" y="-1.5" width="44" height="44" fill="#fff" stroke="#c8c8c8" stroke-width=".4"/><path d="M0 0h7v1h-7zM9 0h1v1h-1zM11 0h3v1h-3zM16 0h3v1h-3zM26 0h1v1h-1zM28 0h1v1h-1zM31 0h2v1h-2zM34 0h7v1h-7zM0 1h1v1h-1zM6 1h1v1h-1zM8 1h1v1h-1zM10 1h8v1h-8zM20 1h1v1h-1zM23 1h2v1h-2zM28 1h2v1h-2zM34 1h1v1h-1zM40 1h1v1h-1zM0 2h1v1h-1zM2 2h3v1h-3zM6 2h1v1h-1zM8 2h1v1h-1zM10 2h3v1h-3zM16 2h5v1h-5zM22 2h3v1h-3zM26 2h3v1h-3zM30 2h3v1h-3zM34 2h1v1h-1zM36 2h3v1h-3zM40 2h1v1h-1zM0 3h1v1h-1zM2 3h3v1h-3zM6 3h1v1h-1zM8 3h6v1h-6zM16 3h1v1h-1zM18 3h2v1h-2zM21 3h4v1h-4zM26 3h1v1h-1zM28 3h5v1h-5zM34 3h1v1h-1zM36 3h3v1h-3zM40 3h1v1h-1zM0 4h1v1h-1zM2 4h3v1h-3zM6 4h1v1h-1zM8 4h3v1h-3zM12 4h1v1h-1zM18 4h1v1h-1zM23 4h2v1h-2zM28 4h1v1h-1zM30 4h3v1h-3zM34 4h1v1h-1zM36 4h3v1h-3zM40 4h1v1h-1zM0 5h1v1h-1zM6 5h1v1h-1zM8 5h2v1h-2zM11 5h5v1h-5zM17 5h1v1h-1zM20 5h1v1h-1zM23 5h3v1h-3zM28 5h4v1h-4zM34 5h1v1h-1zM40 5h1v1h-1zM0 6h7v1h-7zM9 6h1v1h-1zM11 6h2v1h-2zM15 6h2v1h-2zM18 6h1v1h-1zM20 6h2v1h-2zM23 6h3v1h-3zM27 6h1v1h-1zM30 6h1v1h-1zM34 6h7v1h-7zM8 7h1v1h-1zM10 7h1v1h-1zM12 7h1v1h-1zM14 7h1v1h-1zM16 7h1v1h-1zM20 7h4v1h-4zM27 7h2v1h-2zM31 7h2v1h-2zM1 8h8v1h-8zM10 8h2v1h-2zM19 8h2v1h-2zM25 8h1v1h-1zM27 8h4v1h-4zM34 8h1v1h-1zM36 8h1v1h-1zM38 8h1v1h-1zM0 9h1v1h-1zM2 9h5v1h-5zM9 9h1v1h-1zM11 9h4v1h-4zM16 9h2v1h-2zM20 9h4v1h-4zM25 9h2v1h-2zM28 9h2v1h-2zM32 9h1v1h-1zM40 9h1v1h-1zM3 10h2v1h-2zM6 10h3v1h-3zM10 10h1v1h-1zM15 10h1v1h-1zM23 10h4v1h-4zM28 10h2v1h-2zM31 10h1v1h-1zM33 10h1v1h-1zM35 10h1v1h-1zM37 10h2v1h-2zM1 11h2v1h-2zM4 11h1v1h-1zM7 11h1v1h-1zM9 11h1v1h-1zM11 11h1v1h-1zM14 11h1v1h-1zM18 11h1v1h-1zM21 11h3v1h-3zM26 11h2v1h-2zM29 11h1v1h-1zM31 11h1v1h-1zM33 11h1v1h-1zM36 11h1v1h-1zM38 11h1v1h-1zM1 12h1v1h-1zM3 12h3v1h-3zM7 12h1v1h-1zM9 12h1v1h-1zM11 12h2v1h-2zM18 12h1v1h-1zM21 12h3v1h-3zM28 12h1v1h-1zM31 12h1v1h-1zM33 12h3v1h-3zM37 12h3v1h-3zM1 13h1v1h-1zM3 13h3v1h-3zM9 13h1v1h-1zM12 13h3v1h-3zM16 13h2v1h-2zM19 13h2v1h-2zM22 13h2v1h-2zM27 13h1v1h-1zM30 13h1v1h-1zM32 13h1v1h-1zM35 13h1v1h-1zM37 13h1v1h-1zM3 14h1v1h-1zM5 14h1v1h-1zM8 14h1v1h-1zM10 14h3v1h-3zM27 14h1v1h-1zM29 14h3v1h-3zM35 14h1v1h-1zM37 14h1v1h-1zM39 14h2v1h-2zM3 15h1v1h-1zM6 15h2v1h-2zM9 15h3v1h-3zM26 15h2v1h-2zM29 15h2v1h-2zM33 15h1v1h-1zM35 15h5v1h-5zM0 16h2v1h-2zM3 16h1v1h-1zM6 16h7v1h-7zM27 16h2v1h-2zM33 16h1v1h-1zM35 16h1v1h-1zM37 16h2v1h-2zM40 16h1v1h-1zM2 17h5v1h-5zM9 17h3v1h-3zM13 17h1v1h-1zM27 17h8v1h-8zM36 17h4v1h-4zM2 18h1v1h-1zM4 18h3v1h-3zM8 18h1v1h-1zM10 18h2v1h-2zM28 18h4v1h-4zM34 18h3v1h-3zM40 18h1v1h-1zM0 19h1v1h-1zM2 19h1v1h-1zM4 19h2v1h-2zM10 19h1v1h-1zM13 19h1v1h-1zM29 19h2v1h-2zM33 19h1v1h-1zM35 19h2v1h-2zM39 19h1v1h-1zM2 20h2v1h-2zM5 20h1v1h-1zM7 20h1v1h-1zM9 20h1v1h-1zM12 20h2v1h-2zM26 20h1v1h-1zM31 20h1v1h-1zM35 20h1v1h-1zM37 20h1v1h-1zM39 20h1v1h-1zM0 21h8v1h-8zM10 21h1v1h-1zM12 21h2v1h-2zM27 21h2v1h-2zM33 21h3v1h-3zM0 22h3v1h-3zM8 22h3v1h-3zM12 22h2v1h-2zM26 22h2v1h-2zM32 22h2v1h-2zM35 22h1v1h-1zM38 22h2v1h-2zM5 23h1v1h-1zM7 23h1v1h-1zM9 23h1v1h-1zM11 23h2v1h-2zM26 23h1v1h-1zM28 23h2v1h-2zM33 23h2v1h-2zM37 23h1v1h-1zM40 23h1v1h-1zM0 24h5v1h-5zM6 24h1v1h-1zM8 24h1v1h-1zM10 24h1v1h-1zM26 24h1v1h-1zM28 24h1v1h-1zM30 24h1v1h-1zM32 24h1v1h-1zM36 24h1v1h-1zM39 24h1v1h-1zM0 25h5v1h-5zM6 25h1v1h-1zM9 25h1v1h-1zM12 25h1v1h-1zM26 25h2v1h-2zM29 25h2v1h-2zM32 25h2v1h-2zM35 25h1v1h-1zM1 26h1v1h-1zM3 26h2v1h-2zM6 26h1v1h-1zM9 26h1v1h-1zM11 26h3v1h-3zM15 26h2v1h-2zM18 26h1v1h-1zM20 26h3v1h-3zM24 26h1v1h-1zM26 26h1v1h-1zM28 26h3v1h-3zM33 26h2v1h-2zM37 26h1v1h-1zM39 26h1v1h-1zM0 27h1v1h-1zM2 27h1v1h-1zM4 27h2v1h-2zM10 27h2v1h-2zM14 27h1v1h-1zM16 27h1v1h-1zM20 27h3v1h-3zM28 27h2v1h-2zM34 27h3v1h-3zM38 27h2v1h-2zM2 28h1v1h-1zM8 28h1v1h-1zM10 28h1v1h-1zM12 28h1v1h-1zM14 28h2v1h-2zM17 28h1v1h-1zM19 28h3v1h-3zM24 28h1v1h-1zM26 28h3v1h-3zM32 28h1v1h-1zM35 28h3v1h-3zM40 28h1v1h-1zM0 29h3v1h-3zM6 29h1v1h-1zM8 29h3v1h-3zM14 29h1v1h-1zM18 29h2v1h-2zM21 29h1v1h-1zM23 29h1v1h-1zM26 29h2v1h-2zM29 29h1v1h-1zM32 29h2v1h-2zM35 29h2v1h-2zM39 29h2v1h-2zM1 30h1v1h-1zM3 30h3v1h-3zM11 30h5v1h-5zM17 30h4v1h-4zM22 30h1v1h-1zM26 30h1v1h-1zM33 30h1v1h-1zM36 30h1v1h-1zM40 30h1v1h-1zM1 31h3v1h-3zM8 31h1v1h-1zM11 31h1v1h-1zM13 31h1v1h-1zM20 31h1v1h-1zM23 31h3v1h-3zM27 31h1v1h-1zM29 31h1v1h-1zM31 31h1v1h-1zM35 31h2v1h-2zM38 31h1v1h-1zM0 32h1v1h-1zM5 32h4v1h-4zM10 32h3v1h-3zM14 32h2v1h-2zM17 32h2v1h-2zM21 32h2v1h-2zM24 32h3v1h-3zM28 32h2v1h-2zM32 32h5v1h-5zM38 32h3v1h-3zM8 33h1v1h-1zM10 33h1v1h-1zM17 33h2v1h-2zM20 33h2v1h-2zM23 33h2v1h-2zM26 33h2v1h-2zM29 33h1v1h-1zM31 33h2v1h-2zM36 33h2v1h-2zM39 33h2v1h-2zM0 34h7v1h-7zM8 34h1v1h-1zM10 34h1v1h-1zM13 34h4v1h-4zM20 34h1v1h-1zM28 34h1v1h-1zM30 34h1v1h-1zM32 34h1v1h-1zM34 34h1v1h-1zM36 34h2v1h-2zM40 34h1v1h-1zM0 35h1v1h-1zM6 35h1v1h-1zM8 35h1v1h-1zM13 35h1v1h-1zM15 35h2v1h-2zM20 35h2v1h-2zM24 35h1v1h-1zM26 35h2v1h-2zM32 35h1v1h-1zM36 35h1v1h-1zM38 35h1v1h-1zM0 36h1v1h-1zM2 36h3v1h-3zM6 36h1v1h-1zM9 36h1v1h-1zM11 36h3v1h-3zM15 36h2v1h-2zM19 36h3v1h-3zM24 36h1v1h-1zM26 36h1v1h-1zM28 36h1v1h-1zM30 36h1v1h-1zM32 36h5v1h-5zM38 36h3v1h-3zM0 37h1v1h-1zM2 37h3v1h-3zM6 37h1v1h-1zM8 37h1v1h-1zM12 37h3v1h-3zM16 37h1v1h-1zM18 37h1v1h-1zM20 37h2v1h-2zM24 37h6v1h-6zM31 37h6v1h-6zM38 37h3v1h-3zM0 38h1v1h-1zM2 38h3v1h-3zM6 38h1v1h-1zM9 38h2v1h-2zM15 38h2v1h-2zM18 38h2v1h-2zM23 38h1v1h-1zM26 38h1v1h-1zM35 38h1v1h-1zM37 38h1v1h-1zM39 38h2v1h-2zM0 39h1v1h-1zM6 39h1v1h-1zM8 39h1v1h-1zM11 39h2v1h-2zM16 39h2v1h-2zM22 39h1v1h-1zM25 39h1v1h-1zM27 39h1v1h-1zM30 39h2v1h-2zM34 39h1v1h-1zM36 39h2v1h-2zM39 39h1v1h-1zM0 40h7v1h-7zM8 40h3v1h-3zM17 40h1v1h-1zM19 40h1v1h-1zM22 40h1v1h-1zM24 40h2v1h-2zM30 40h1v1h-1zM34 40h1v1h-1zM37 40h1v1h-1z" fill="#7a7a7a"/><rect x="15.5" y="15.5" width="10" height="10" fill="#fff"/><g fill="none" stroke="#8a8a8a" stroke-width=".45"><ellipse cx="19.5" cy="19.5" rx="3.6" ry="3.1"/><ellipse cx="22" cy="21.8" rx="3.1" ry="2.7" fill="#fff"/></g></svg>
<svg class="a" style="left:841px;top:394px" width="19" height="19" viewBox="0 0 19 19"><rect x="0" y="0" width="19" height="19" fill="#f1f5f4"/><g fill="#222"><path d="M0 0H8V8H0Z M2 2V6H6V2Z" fill-rule="evenodd"/><path d="M11 0H19V8H11Z M13 2V6H17V2Z" fill-rule="evenodd"/><path d="M0 11H8V19H0Z M2 13V17H6V13Z" fill-rule="evenodd"/><rect x="11" y="11" width="3" height="3"/><rect x="15" y="11" width="4" height="2"/><rect x="11" y="15" width="2" height="4"/><rect x="14" y="14" width="3" height="3"/><rect x="17" y="16" width="2" height="3"/></g></svg>

<!-- tabs widget -->
<div class="a card" style="left:704px;top:480px;width:293px;height:300px"></div>
<div class="a tab" style="left:747px">最新</div>
<div class="a tab" style="left:834px">热点</div>
<div class="a tab" style="left:921px">随机</div>
<div class="a" style="left:719px;top:530px;width:261px;height:2.5px;background:#efefef"></div>
<div class="a" style="left:719px;top:529px;width:87px;height:3px;background:#48a0e6"></div>
<div class="a li" style="top:540px">太香啦！完全免费的「 超星<span style="letter-spacing:2.5px">...</span></div>
<div class="a li" style="top:581px">今日软件更新<span class="ls" style="margin-left:10px">2020–4–24</span></div>
<div class="a li" style="top:622px">今日热闻：微软表示每月产<span style="letter-spacing:2.5px">...</span></div>
<div class="a li" style="top:663px">你的手机你做主！免 <span style="letter-spacing:1.2px">ROOT</span> <span style="letter-spacing:2.5px">...</span></div>
<div class="a li" style="top:704px">今日软件更新<span class="ls" style="margin-left:10px">2020–4–23</span></div>
<div class="a dl" style="top:573px"></div><div class="a dl" style="top:614px"></div><div class="a dl" style="top:655px"></div><div class="a dl" style="top:696px"></div>
<svg class="a" style="left:727px;top:545px" width="16" height="14" viewBox="0 0 16 14"><path d="M4 1H15L12 12H1Z" fill="#555"/><path d="M1 12Q0.5 13.5 2 13.5H12L15 2.5" fill="none" stroke="#555" stroke-width="1"/><path d="M6 4H12M5.5 6H11.5" stroke="#ddd" stroke-width=".8"/></svg>
<svg class="a" style="left:727px;top:586px" width="16" height="14" viewBox="0 0 16 14"><path d="M4 1H15L12 12H1Z" fill="#555"/><path d="M1 12Q0.5 13.5 2 13.5H12L15 2.5" fill="none" stroke="#555" stroke-width="1"/><path d="M6 4H12M5.5 6H11.5" stroke="#ddd" stroke-width=".8"/></svg>
<svg class="a" style="left:727px;top:627px" width="16" height="14" viewBox="0 0 16 14"><path d="M4 1H15L12 12H1Z" fill="#555"/><path d="M1 12Q0.5 13.5 2 13.5H12L15 2.5" fill="none" stroke="#555" stroke-width="1"/><path d="M6 4H12M5.5 6H11.5" stroke="#ddd" stroke-width=".8"/></svg>
<svg class="a" style="left:727px;top:668px" width="16" height="14" viewBox="0 0 16 14"><path d="M4 1H15L12 12H1Z" fill="#555"/><path d="M1 12Q0.5 13.5 2 13.5H12L15 2.5" fill="none" stroke="#555" stroke-width="1"/><path d="M6 4H12M5.5 6H11.5" stroke="#ddd" stroke-width=".8"/></svg>
<svg class="a" style="left:727px;top:709px" width="16" height="14" viewBox="0 0 16 14"><path d="M4 1H15L12 12H1Z" fill="#555"/><path d="M1 12Q0.5 13.5 2 13.5H12L15 2.5" fill="none" stroke="#555" stroke-width="1"/><path d="M6 4H12M5.5 6H11.5" stroke="#ddd" stroke-width=".8"/></svg>

<!-- floating -->
<div class="a" style="left:994px;top:618px;width:40px;height:40px;background:#9b9b9b"></div>
<div class="a" style="left:994px;top:668px;width:40px;height:40px;background:#9b9b9b"></div>
<svg class="a" style="left:1003px;top:628px" width="24" height="20" viewBox="0 0 24 20"><ellipse cx="9" cy="8" rx="8.5" ry="7" fill="#fff"/><ellipse cx="15.5" cy="12.5" rx="7.5" ry="6.2" fill="#fff" stroke="#9b9b9b" stroke-width="1"/></svg>
<svg class="a" style="left:1005px;top:679px" width="18" height="18" viewBox="0 0 18 18"><circle cx="7.5" cy="7.5" r="5.5" fill="none" stroke="#fff" stroke-width="2.4"/><path d="M11.5 11.5L16.5 16.5" stroke="#fff" stroke-width="3"/></svg>
<div class="a" style="left:974.5px;top:637.5px;width:55px;height:55px;border-radius:50%;background:#4caf50;box-shadow:0 1px 3px rgba(0,0,0,.15)"></div>
<div class="a" style="left:974.5px;top:657px;width:55px;color:#fff;font-size:12.5px;font-weight:bold;line-height:16px;text-align:center;letter-spacing:3px;padding-left:3px">简悦</div>
<!-- scrollbar -->
<div class="a" style="left:1054px;top:79px;width:10px;height:659px;background:#f4f4f4"></div>
<div class="a" style="left:1054px;top:80px;width:10px;height:144px;background:#c1c1c1"></div>
</body></html>
